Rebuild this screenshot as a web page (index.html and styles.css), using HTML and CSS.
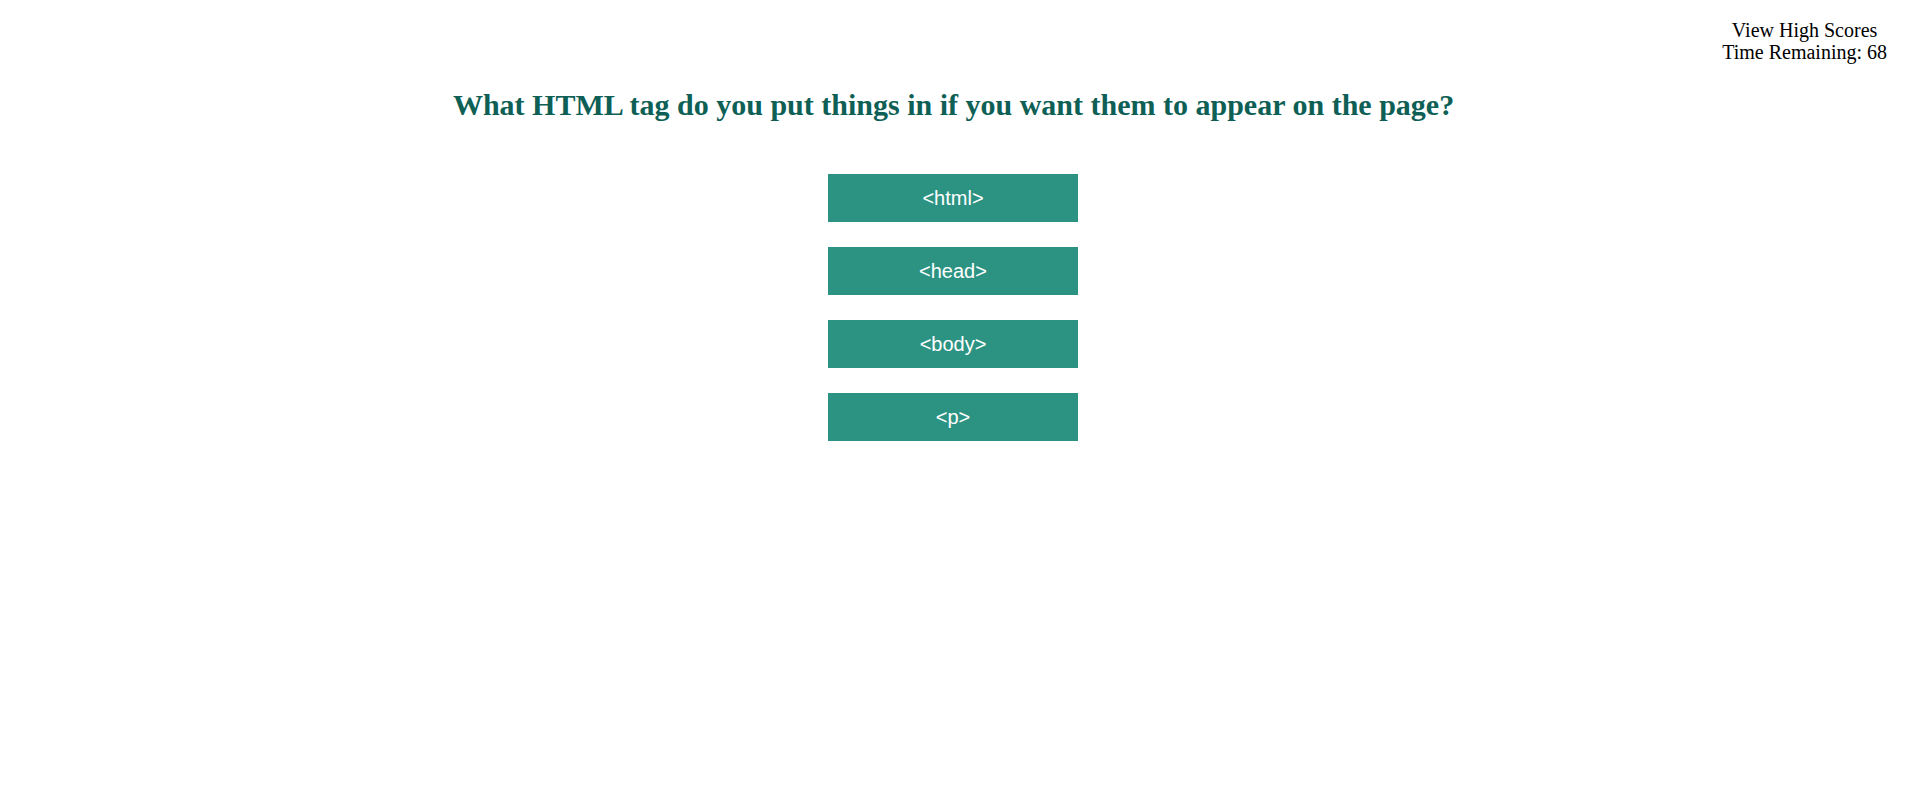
FILE: index.html
```html
<!DOCTYPE html>
<html>
<head>
<meta charset="utf-8">
<link rel="stylesheet" href="styles.css">
</head>
<body>
<header class="topbar">
  <div class="status">
    <div>View High Scores</div>
    <div>Time Remaining: 68</div>
  </div>
</header>
<main class="quiz">
  <h1 class="question">What HTML tag do you put things in if you want them to appear on the page?</h1>
  <div class="choices">
    <button class="choice">&lt;html&gt;</button>
    <button class="choice">&lt;head&gt;</button>
    <button class="choice">&lt;body&gt;</button>
    <button class="choice">&lt;p&gt;</button>
  </div>
</main>
</body>
</html>
```

FILE: styles.css
```css
html, body {
  margin: 0;
  padding: 0;
  background: #ffffff;
}
body {
  font-family: "Liberation Serif", "Times New Roman", serif;
  color: #000;
}
.topbar {
  display: flex;
  justify-content: flex-end;
  padding: 19px 20px 0 0;
}
.status {
  text-align: center;
  font-size: 20px;
  line-height: 22px;
}
.quiz {
  display: flex;
  flex-direction: column;
  align-items: center;
}
.question {
  margin: 0;
  margin-top: 25px;
  font-size: 30px;
  font-weight: bold;
  color: #0e5f55;
  text-align: center;
}
.choices {
  display: flex;
  flex-direction: column;
  gap: 25px;
  margin-top: 52px;
  margin-right: 1px;
}
.choice {
  width: 250px;
  height: 48px;
  border: none;
  background: #2c9383;
  color: #ffffff;
  font-family: "Liberation Sans", Arial, sans-serif;
  font-size: 20px;
  padding: 0;
  cursor: pointer;
}
```
